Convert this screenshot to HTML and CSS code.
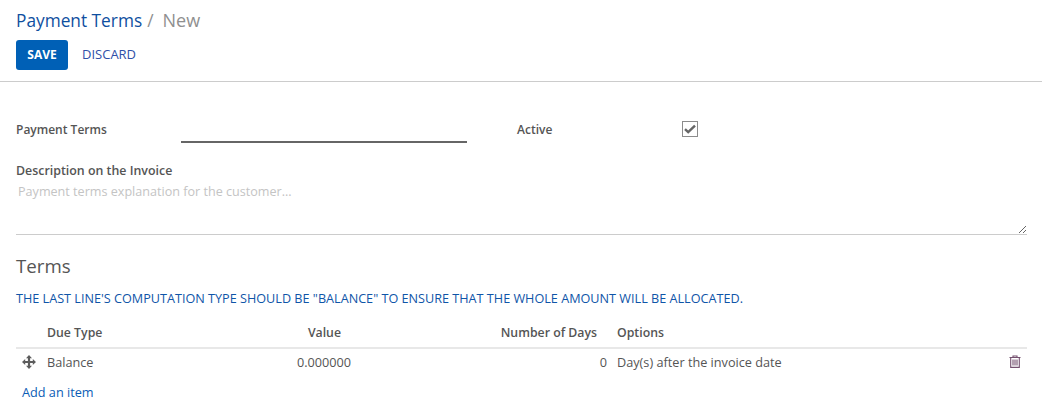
FILE: index.html
```html
<!DOCTYPE html>
<html lang="en">
<head>
<meta charset="utf-8">
<title>Payment Terms</title>
<link rel="stylesheet" href="styles.css">
</head>
<body>
<header class="control">
  <h1 class="crumbs"><a class="crumb-link">Payment Terms</a><span class="crumb-sep">/</span><span class="crumb-now">New</span></h1>
  <div class="actions">
    <button class="btn-save">SAVE</button>
    <button class="btn-discard">DISCARD</button>
  </div>
</header>
<main class="sheet">
  <div class="top-row">
    <label class="label name-label">Payment Terms</label>
    <input class="name-input" type="text">
    <label class="label active-label">Active</label>
    <span class="checkbox">
      <svg width="12" height="10" viewBox="0 0 12 10"><path d="M1 5.2 L4.2 8.2 L11 1.6" fill="none" stroke="#666" stroke-width="2.4"/></svg>
    </span>
  </div>
  <label class="label desc-label">Description on the Invoice</label>
  <textarea class="desc" placeholder="Payment terms explanation for the customer..."></textarea>
  <h2 class="terms-title">Terms</h2>
  <p class="notice">THE LAST LINE'S COMPUTATION TYPE SHOULD BE "BALANCE" TO ENSURE THAT THE WHOLE AMOUNT WILL BE ALLOCATED.</p>
  <table class="lines">
    <thead>
      <tr>
        <th class="c-handle"></th>
        <th class="c-type">Due Type</th>
        <th class="c-value">Value</th>
        <th class="c-days">Number of Days</th>
        <th class="c-opts">Options</th>
        <th class="c-del"></th>
      </tr>
    </thead>
    <tbody>
      <tr>
        <td class="c-handle">
          <svg class="move" width="14" height="14" viewBox="0 0 14 14"><path d="M7 0 L10 3.2 H8.1 V5.9 H10.8 V4 L14 7 L10.8 10 V8.1 H8.1 V10.8 H10 L7 14 L4 10.8 H5.9 V8.1 H3.2 V10 L0 7 L3.2 4 V5.9 H5.9 V3.2 H4 Z" fill="#5c5c5c"/></svg>
        </td>
        <td class="c-type">Balance</td>
        <td class="c-value">0.000000</td>
        <td class="c-days">0</td>
        <td class="c-opts">Day(s) after the invoice date</td>
        <td class="c-del">
          <svg class="trash" width="12" height="13" viewBox="0 0 12 13"><path d="M4 2.5 V1 H8 V2.5 M0.5 2.5 H11.5 M1.7 2.5 V12.4 H10.3 V2.5" fill="none" stroke="#74506f" stroke-width="1.1"/><path d="M4 4.5 V10.5 M6 4.5 V10.5 M8 4.5 V10.5" stroke="#74506f" stroke-width="1.1"/></svg>
        </td>
      </tr>
    </tbody>
  </table>
  <a class="add-item">Add an item</a>
</main>
</body>
</html>
```
FILE: styles.css
```css
* { box-sizing: border-box; }
html, body { margin: 0; padding: 0; background: #fff; }
body {
  width: 1042px;
  height: 415px;
  overflow: hidden;
  font-family: "Open Sans", "Noto Sans", sans-serif;
  font-size: 13px;
  color: #555;
}
.control {
  height: 82px;
  padding: 7px 16px 0;
  border-bottom: 1px solid #ccc;
}
.crumbs {
  margin: 0;
  height: 26px;
  font-size: 17.3px;
  font-weight: 400;
  line-height: 26px;
  white-space: nowrap;
}
.crumb-link { color: #0f4fa0; }
.crumb-sep { color: #8f8f8f; margin: 0 9px 0 5px; }
.crumb-now { color: #8f8f8f; font-size: 18px; }
.actions { display: flex; align-items: center; margin-top: 7px; }
.btn-save {
  width: 52px;
  height: 30px;
  background: #0060b6;
  border: 0;
  border-radius: 3px;
  color: #fff;
  font: 700 12px "Open Sans", sans-serif;
  padding: 0 0 2px;
}
.btn-discard {
  background: none;
  border: 0;
  margin-left: 14px;
  padding: 0 0 2px;
  color: #2f4fa8;
  font: 400 13px "Open Sans", sans-serif;
}
.sheet { padding: 0 15px 0 16px; }
.label { font-weight: 600; font-size: 12px; color: #555; }
.top-row { display: flex; align-items: flex-start; height: 61px; padding-top: 39px; }
.name-label { width: 165px; line-height: 18px; }
.name-input {
  width: 286px;
  height: 22px;
  border: 0;
  border-bottom: 2px solid #666;
  outline: 0;
  background: none;
}
.active-label { margin-left: 50px; width: 165px; line-height: 18px; }
.checkbox {
  width: 16px;
  height: 16px;
  border: 1px solid #8c8c8c;
  display: flex;
  align-items: center;
  justify-content: center;
}
.desc-label { display: block; line-height: 18px; margin-top: 19px; font-size: 12.4px; }
.desc {
  display: block;
  width: 100%;
  height: 54px;
  margin-top: 1px;
  padding: 2px;
  border: 0;
  border-bottom: 1px solid #ccc;
  outline: 0;
  font: 400 12.6px/18px "Open Sans", sans-serif;
  color: #555;
  resize: vertical;
}
.desc::placeholder { color: #c4c4c4; opacity: 1; }
.terms-title {
  margin: 17px 0 0;
  font-size: 18.7px;
  font-weight: 400;
  line-height: 27px;
  color: #555;
}
.notice {
  margin: 10px 0 0;
  font-size: 12.65px;
  line-height: 18px;
  color: #0f55a8;
  white-space: nowrap;
}
.lines {
  margin-top: 11px;
  width: 100%;
  border-collapse: collapse;
  table-layout: fixed;
  font-size: 12.7px;
}
.lines th {
  font-weight: 600;
  height: 30px;
  padding: 0;
  border-bottom: 2px solid #e8e8e8;
  text-align: left;
  font-size: 12.3px;
}
.lines td { height: 28px; padding: 0 0 2px; border: 0; }
.c-handle { width: 31px; }
.c-type { width: 200px; }
.lines .c-value { width: 104px; text-align: right; }
.lines .c-days { width: 256px; text-align: right; }
.lines th.c-value, .lines th.c-days { padding-right: 10px; }
.lines .c-opts { padding-left: 10px; }
.c-del { width: 29px; text-align: left; }
.move { display: block; margin-left: 6px; }
.trash { display: block; margin-left: 11px; }
.add-item { display: block; margin: 8px 0 0 6px; line-height: 16px; font-size: 12.7px; color: #0b5cb5; }
```
